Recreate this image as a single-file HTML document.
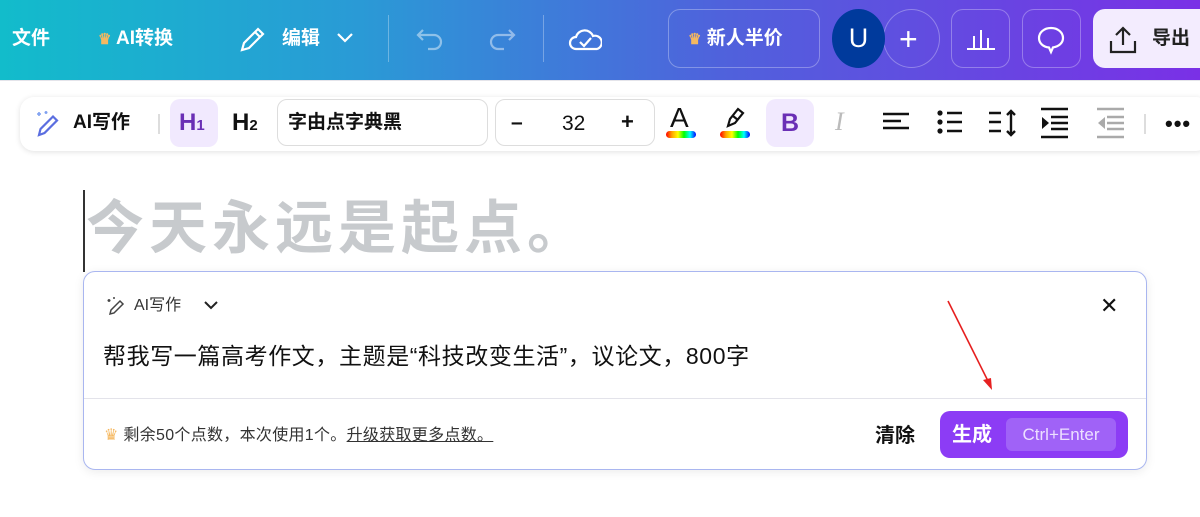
<!DOCTYPE html>
<html><head><meta charset="utf-8"><style>
*{margin:0;padding:0;box-sizing:border-box}
body{width:1200px;height:517px;overflow:hidden;background:#fff;font-family:"Liberation Sans","Noto Sans CJK SC",sans-serif;position:relative;line-height:1}
.hdr{position:absolute;left:0;top:0;width:1200px;height:80px;background:linear-gradient(90deg,#12bccb 0%,#2a9ad6 30%,#4f62dc 60%,#7a30e6 100%)}
.ab{position:absolute;color:#fff;font-weight:bold;font-size:19px;line-height:1}
.box{position:absolute;border:1px solid rgba(255,255,255,.3);border-radius:12px}
.tb{position:absolute;left:20px;top:97px;width:1190px;height:54px;background:#fff;border-radius:14px;box-shadow:0 1px 6px rgba(0,0,0,.12)}
.t{position:absolute;font-size:19px;color:#111;font-weight:bold;line-height:1}
.card{position:absolute;left:83px;top:271px;width:1064px;height:199px;border-radius:12px;background:#fff;border:1.5px solid #a9b6f0;box-shadow:0 2px 10px rgba(0,0,0,.08)}
</style></head><body>
<div class="hdr">
 <div class="ab" style="left:12px;top:29px">文件</div>
 <div class="ab" style="left:98px;top:29px"><span style="color:#f5b860;font-size:15px">♛</span> AI转换</div>
 <svg style="position:absolute;left:238px;top:24px" width="30" height="30" viewBox="0 0 30 30" fill="none" stroke="#fff" stroke-width="2.2"><path d="M4 26l2-7L20 5l5 5L11 24z M17 8l5 5"/></svg>
 <div class="ab" style="left:282px;top:29px">编辑</div>
 <svg style="position:absolute;left:335px;top:31px" width="20" height="14" viewBox="0 0 20 14" fill="none" stroke="#fff" stroke-width="2.2"><path d="M3 3l7 7 7-7"/></svg>
 <div style="position:absolute;left:388px;top:15px;width:1px;height:47px;background:rgba(255,255,255,.3)"></div>
 <svg style="position:absolute;left:415px;top:26px" width="34" height="26" viewBox="0 0 34 26" fill="none" stroke="rgba(255,255,255,.45)" stroke-width="2.2"><path d="M8 4L3 9l5 5M3 9h16a7 7 0 010 14h-6"/></svg>
 <svg style="position:absolute;left:483px;top:26px" width="34" height="26" viewBox="0 0 34 26" fill="none" stroke="rgba(255,255,255,.45)" stroke-width="2.2"><path d="M26 4l5 5-5 5M31 9H15a7 7 0 000 14h6"/></svg>
 <div style="position:absolute;left:543px;top:15px;width:1px;height:47px;background:rgba(255,255,255,.3)"></div>
 <svg style="position:absolute;left:568px;top:24px" width="34" height="30" viewBox="0 0 34 30" fill="none" stroke="#fff" stroke-width="2.2"><path d="M10 25H8a6 6 0 010-12 9 9 0 0117 -1 6 6 0 014 13z M12 18l4 4 7-8"/></svg>
 <div class="box" style="left:668px;top:9px;width:152px;height:59px"></div>
 <div class="ab" style="left:688px;top:29px"><span style="color:#f5b860;font-size:15px">♛</span> 新人半价</div>
 <div style="position:absolute;left:883px;top:9px;width:57px;height:59px;border-radius:50%;border:1px solid rgba(255,255,255,.3)"></div>
 <div style="position:absolute;left:899px;top:23px;color:#fff;font-size:32px;line-height:1">+</div>
 <div style="position:absolute;left:832px;top:9px;width:53px;height:59px;border-radius:50%;background:#003a9c;color:#fff;font-size:27px;text-align:center;line-height:59px">U</div>
 <div class="box" style="left:951px;top:9px;width:59px;height:59px"></div>
 <svg style="position:absolute;left:965px;top:26px" width="32" height="26" viewBox="0 0 32 26" fill="none" stroke="#fff" stroke-width="2"><path d="M2 23h28M9 23V10M16 23V4M23 23V12"/></svg>
 <div class="box" style="left:1022px;top:9px;width:59px;height:59px"></div>
 <svg style="position:absolute;left:1036px;top:25px" width="30" height="30" viewBox="0 0 30 30" fill="none" stroke="#fff" stroke-width="2.2"><path d="M15 3C8 3 3 7.5 3 13c0 5 4 9 10 9.5L15 27l2-4.6c6-1 10-4.5 10-9.4C27 7.5 22 3 15 3z"/></svg>
 <div style="position:absolute;left:1093px;top:9px;width:120px;height:59px;border-radius:12px;background:#f3ecfe"></div>
 <svg style="position:absolute;left:1107px;top:25px" width="32" height="30" viewBox="0 0 32 30" fill="none" stroke="#222" stroke-width="2.2"><path d="M16 20V3M9 10l7-7 7 7M4 16v11h24V16"/></svg>
 <div class="ab" style="left:1152px;top:29px;color:#222">导出</div>
</div>
<div style="position:absolute;left:0;top:80px;width:1200px;height:1px;background:#e4e4ea"></div>
<div class="tb">
 <svg style="position:absolute;left:13px;top:11px" width="30" height="30" viewBox="0 0 30 30" fill="none" stroke="#5b6ee0" stroke-width="2.2"><path d="M6 27l1.5-6L20 8.5l4 4L11.5 25z"/><path d="M6 4v4M4 6h4M13 3v3M11.5 4.5h3" stroke="#7fa0f0" stroke-width="1.6"/></svg>
 <div class="t" style="left:53px;top:16px">AI写作</div>
 <div style="position:absolute;left:138px;top:17px;width:2px;height:20px;background:#ddd"></div>
 <div style="position:absolute;left:150px;top:2px;width:48px;height:48px;border-radius:10px;background:#f1e9fe"></div>
 <div style="position:absolute;left:159px;top:14px;color:#6a2fb5;font-size:24px;font-weight:bold">H<span style="font-size:15px">1</span></div>
 <div style="position:absolute;left:212px;top:14px;color:#111;font-size:24px;font-weight:bold">H<span style="font-size:15px">2</span></div>
 <div style="position:absolute;left:257px;top:2px;width:211px;height:47px;border:1px solid #ddd;border-radius:10px"></div>
 <div class="t" style="left:268px;top:16px">字由点字典黑</div>
 <div style="position:absolute;left:475px;top:2px;width:160px;height:47px;border:1px solid #ddd;border-radius:10px"></div>
 <div class="t" style="left:491px;top:15px;font-size:21px">–</div>
 <div class="t" style="left:542px;top:16px;font-weight:normal;font-size:21px">32</div>
 <div class="t" style="left:601px;top:14px;font-size:22px">+</div>
 <div style="position:absolute;left:650px;top:7px;font-size:28px;color:#111;line-height:1">A</div>
 <div style="position:absolute;left:646px;top:34px;width:30px;height:7px;border-radius:4px;background:linear-gradient(90deg,red,orange,yellow,lime,cyan,blue)"></div>
 <svg style="position:absolute;left:703px;top:6px" width="26" height="26" viewBox="0 0 26 26" fill="none" stroke="#111" stroke-width="2.2"><path d="M5 23l2-7 8-10 5 4-8 10z M10 13l5 4"/></svg>
 <div style="position:absolute;left:700px;top:34px;width:30px;height:7px;border-radius:4px;background:linear-gradient(90deg,red,orange,yellow,lime,cyan,blue)"></div>
 <div style="position:absolute;left:746px;top:2px;width:48px;height:48px;border-radius:10px;background:#f1e9fe;color:#6a2fb5;font-size:25px;font-weight:bold;text-align:center;line-height:48px">B</div>
 <div style="position:absolute;left:815px;top:12px;font-size:26px;font-style:italic;color:#bbb;font-family:'Liberation Serif',serif">I</div>
 <svg style="position:absolute;left:862px;top:14px;stroke:#111;stroke-width:2.4" width="28" height="24" viewBox="0 0 28 24"><path d="M1 3h26M1 10h18M1 17h26"/></svg>
 <svg style="position:absolute;left:916px;top:12px" width="28" height="26" viewBox="0 0 28 26"><g fill="#111"><circle cx="4" cy="4" r="2.6"/><circle cx="4" cy="13" r="2.6"/><circle cx="4" cy="22" r="2.6"/></g><path d="M11 4h15M11 13h15M11 22h15" stroke="#111" stroke-width="2.4"/></svg>
 <svg style="position:absolute;left:968px;top:12px" width="30" height="28" viewBox="0 0 30 28" fill="none" stroke="#111" stroke-width="2.4"><path d="M1 4h12M1 13h12M1 22h12M23 2v24M19 6l4-4 4 4M19 22l4 4 4-4"/></svg>
 <svg style="position:absolute;left:1020px;top:10px" width="30" height="32" viewBox="0 0 30 32"><path d="M1 2h27M11 10h17M11 16h17M11 22h17M1 30h27" stroke="#111" stroke-width="2.4"/><path d="M2 10l7 6-7 6z" fill="#111"/></svg>
 <svg style="position:absolute;left:1076px;top:10px" width="30" height="32" viewBox="0 0 30 32"><path d="M1 2h27M11 10h17M11 16h17M11 22h17M1 30h27" stroke="#aaa" stroke-width="2.4"/><path d="M9 10l-7 6 7 6z" fill="#aaa"/></svg>
 <div style="position:absolute;left:1124px;top:17px;width:2px;height:20px;background:#ddd"></div>
 <div style="position:absolute;left:1145px;top:16px;font-size:22px;font-weight:bold;color:#111;letter-spacing:1px">•••</div>
</div>
<div style="position:absolute;left:83px;top:190px;width:2px;height:82px;background:#333"></div>
<div style="position:absolute;left:86px;top:200px;font-size:58px;font-weight:bold;color:#c7cacd;letter-spacing:5px;line-height:1">今天永远是起点。</div>
<div class="card">
 <svg style="position:absolute;left:22px;top:24px" width="20" height="20" viewBox="0 0 20 20" fill="none" stroke="#444" stroke-width="1.5"><path d="M4 18l1-4 9-9 3 3-9 9z M3 3v3M1.5 4.5h3M8 1v2"/></svg>
 <div style="position:absolute;left:50px;top:26px;font-size:16px;color:#333">AI写作</div>
 <svg style="position:absolute;left:118px;top:27px" width="18" height="14" viewBox="0 0 18 14" fill="none" stroke="#222" stroke-width="2"><path d="M3 3l6 6 6-6"/></svg>
 <div style="position:absolute;left:1016px;top:23px;font-size:22px;color:#111">✕</div>
 <div style="position:absolute;left:19px;top:73px;font-size:23px;letter-spacing:0.6px;color:#111">帮我写一篇高考作文，主题是“科技改变生活”，议论文，800字</div>
 <div style="position:absolute;left:0;top:126px;width:1062px;height:1px;background:#e3e3ea"></div>
 <div style="position:absolute;left:20px;top:156px;font-size:16px;letter-spacing:0.3px;color:#333"><span style="color:#f5b860">♛</span> 剩余50个点数，本次使用1个。<span style="text-decoration:underline">升级获取更多点数。</span></div>
 <div style="position:absolute;left:791px;top:154px;font-size:20px;font-weight:bold;color:#111">清除</div>
 <div style="position:absolute;left:856px;top:139px;width:188px;height:47px;border-radius:10px;background:#8c3cf5"></div>
 <div style="position:absolute;left:868px;top:153px;font-size:20px;font-weight:bold;color:#fff">生成</div>
 <div style="position:absolute;left:922px;top:146px;width:110px;height:33px;border-radius:6px;background:#a062f7;color:#ecdfff;font-size:17px;text-align:center;line-height:33px">Ctrl+Enter</div>
</div>
<svg style="position:absolute;left:940px;top:295px" width="60" height="100" viewBox="0 0 60 100"><path d="M8 6L50 90" stroke="#e62020" stroke-width="1.6"/><path d="M52 95l-9-10 8-2z" fill="#e62020"/></svg>
</body></html>
